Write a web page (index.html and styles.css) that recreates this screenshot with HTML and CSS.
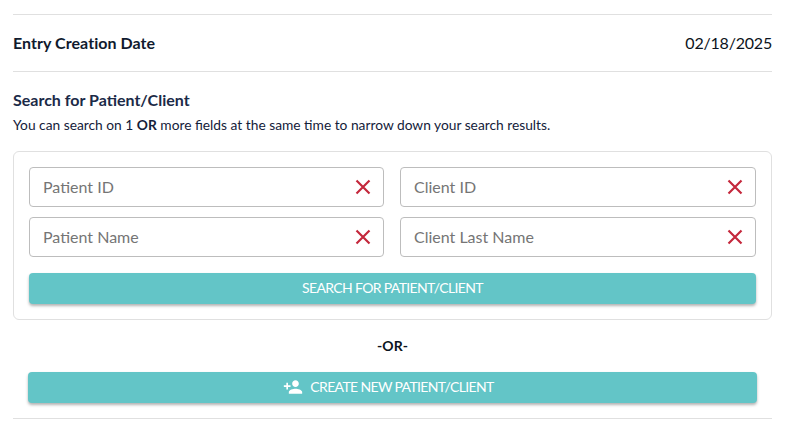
FILE: index.html
```html
<!DOCTYPE html>
<html lang="en">
<head>
  <meta charset="UTF-8">
  <title>Search for Patient/Client</title>
  <link rel="stylesheet" href="styles.css">
</head>
<body>
  <main class="page">
    <div class="entry-row">
      <span class="entry-label">Entry Creation Date</span>
      <span class="entry-value">02/18/2025</span>
    </div>

    <section class="search">
      <h2 class="search-title">Search for Patient/Client</h2>
      <p class="search-hint">You can search on 1 <b>OR</b> more fields at the same time to narrow down your search results.</p>

      <div class="search-card">
        <div class="field-grid">
          <div class="field">
            <span class="field-text">Patient ID</span>
            <svg class="clear-icon" viewBox="0 0 16 16"><path d="M1.5 1.5 14.5 14.5M14.5 1.5 1.5 14.5"/></svg>
          </div>
          <div class="field">
            <span class="field-text">Client ID</span>
            <svg class="clear-icon" viewBox="0 0 16 16"><path d="M1.5 1.5 14.5 14.5M14.5 1.5 1.5 14.5"/></svg>
          </div>
          <div class="field">
            <span class="field-text">Patient Name</span>
            <svg class="clear-icon" viewBox="0 0 16 16"><path d="M1.5 1.5 14.5 14.5M14.5 1.5 1.5 14.5"/></svg>
          </div>
          <div class="field">
            <span class="field-text">Client Last Name</span>
            <svg class="clear-icon" viewBox="0 0 16 16"><path d="M1.5 1.5 14.5 14.5M14.5 1.5 1.5 14.5"/></svg>
          </div>
        </div>
        <button class="btn btn-search">SEARCH FOR PATIENT/CLIENT</button>
      </div>
    </section>

    <div class="or-text">-OR-</div>

    <div class="create-wrap">
      <button class="btn btn-create">
        <svg class="add-icon" viewBox="0 0 24 24"><path d="M15 12c2.21 0 4-1.79 4-4s-1.79-4-4-4-4 1.79-4 4 1.79 4 4 4zm-9-2V7H4v3H1v2h3v3h2v-3h3v-2H6zm9 4c-2.67 0-8 1.34-8 4v2h16v-2c0-2.66-5.33-4-8-4z"/></svg>
        CREATE NEW PATIENT/CLIENT
      </button>
    </div>
  </main>
</body>
</html>
```

FILE: styles.css
```css
body {
  margin: 0;
  background-color: #fff;
  font-family: Lato, "Open Sans", sans-serif;
  color: #000;
}

.page {
  padding: 14px 18px 0 13px;
}

.entry-row {
  display: flex;
  justify-content: space-between;
  align-items: center;
  height: 54px;
  padding-bottom: 2px;
  border-top: 1px solid #e0e0e0;
  border-bottom: 1px solid #e0e0e0;
}

.entry-label {
  font-size: 16px;
  font-weight: 700;
  letter-spacing: 0.05px;
  color: #101a2e;
}

.entry-value {
  font-size: 16px;
  letter-spacing: -0.2px;
  color: #0b1320;
}

.search {
  padding-top: 19px;
}

.search-title {
  margin: 0;
  font-size: 16px;
  line-height: 18px;
  font-weight: 700;
  color: #1b2a47;
}

.search-hint {
  margin: 8px 0 0;
  font-size: 13.78px;
  line-height: 16px;
  color: #14213a;
}

.search-card {
  margin-top: 18px;
  padding: 15px;
  border: 1px solid #e0e0e0;
  border-radius: 6px;
}

.field-grid {
  display: grid;
  grid-template-columns: 355px 1fr;
  gap: 10px 16px;
}

.field {
  display: flex;
  justify-content: space-between;
  align-items: center;
  height: 38px;
  padding: 0 12px 0 13px;
  border: 1px solid #bdbdbd;
  border-radius: 4px;
}

.field-text {
  padding-bottom: 2px;
  font-size: 16px;
  color: #757575;
}

.clear-icon {
  width: 16px;
  height: 16px;
  fill: none;
  stroke: #c4283c;
  stroke-width: 2.2;
}

.btn {
  display: flex;
  justify-content: center;
  align-items: center;
  width: 100%;
  padding: 0 0 2px;
  border: none;
  border-radius: 4px;
  background-color: #63c5c7;
  color: #fff;
  font-family: inherit;
  font-size: 14px;
  letter-spacing: -0.65px;
  box-shadow: 0 2px 3px rgba(0, 0, 0, 0.3);
}

.btn-search {
  height: 31px;
  margin-top: 16px;
}

.or-text {
  margin-top: 17px;
  text-align: center;
  font-size: 14px;
  line-height: 17px;
  font-weight: 700;
  color: #0b1320;
}

.create-wrap {
  margin-top: 18px;
  padding: 0 15px 15px;
  border-bottom: 1px solid #e0e0e0;
}

.btn-create {
  height: 31px;
  padding-right: 8px;
}

.add-icon {
  width: 20px;
  height: 20px;
  margin-right: 7px;
  fill: #fff;
}
```
